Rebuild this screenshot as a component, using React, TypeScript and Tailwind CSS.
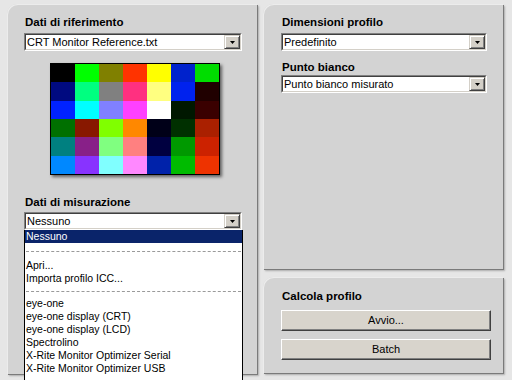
import React from "react";

const grid: string[][] = [
  ["#000000", "#00ff00", "#808000", "#ff3300", "#ffff00", "#0022cc", "#00dd00"],
  ["#000a80", "#00ff80", "#808080", "#ff3080", "#ffff80", "#0022ee", "#200000"],
  ["#0022ff", "#00ffff", "#8080ff", "#ff40ff", "#ffffff", "#001800", "#3a0000"],
  ["#007000", "#881800", "#80ff00", "#ff8800", "#000018", "#003000", "#aa2000"],
  ["#008080", "#882088", "#80ff80", "#ff8080", "#000040", "#009900", "#cc2200"],
  ["#0088ff", "#8833ff", "#80ffff", "#ff88ff", "#0022aa", "#00bb00", "#ee3300"],
];

function DropBtn() {
  return (
    <div className="w-[16px] h-full bg-[#d4d0c8] border border-t-[#d4d0c8] border-l-[#d4d0c8] border-b-[#404040] border-r-[#404040] shadow-[inset_1px_1px_0_#ffffff,inset_-1px_-1px_0_#808080] flex items-center justify-center">
      <svg width="5" height="3" viewBox="0 0 5 3">
        <polygon points="0,0 5,0 2.5,3" fill="#000" />
      </svg>
    </div>
  );
}

function Combo({ text, w }: { text: string; w: string }) {
  return (
    <div className={`h-[18px] border border-t-[#808080] border-l-[#808080] border-b-white border-r-white ${w}`}>
      <div className="h-full flex items-stretch border border-t-[#404040] border-l-[#404040] border-b-[#d4d0c8] border-r-[#d4d0c8] bg-white">
        <div className="flex-1 pl-[1px] text-[11px] leading-[14px] text-black whitespace-nowrap overflow-hidden">{text}</div>
        <DropBtn />
      </div>
    </div>
  );
}

function Label({ children }: { children: React.ReactNode }) {
  return <div className="text-[11.5px] leading-[14px] font-bold text-black">{children}</div>;
}

function Button({ children }: { children: React.ReactNode }) {
  return (
    <div className="w-[210px] h-[21px] bg-[#d8d4cc] border border-t-white border-l-white border-b-[#404040] border-r-[#404040] shadow-[inset_-1px_-1px_0_#808080] flex items-center justify-center text-[11px] text-black">
      {children}
    </div>
  );
}

function Sep({ h }: { h: string }) {
  return (
    <div className={`${h} flex items-center px-[1px]`}>
      <div className="w-full border-t border-dashed border-[#9a9a9a]" />
    </div>
  );
}

const panel =
  "bg-[#d3d3d3] rounded-tl-[10px] shadow-[inset_1px_1px_0_#ececec,1px_1px_0_#7a7a7a,2px_2px_2px_rgba(0,0,0,0.25)]";

export default function App() {
  return (
    <div className="w-[512px] h-[380px] overflow-hidden bg-[#e6e6e6] flex gap-[6px] pl-[7px] pt-[4px] font-['Liberation_Sans',Arial,sans-serif]">
      <div className={`w-[250px] h-[370px] ${panel} pl-[17px] pt-[11px] flex flex-col`}>
        <div className="pl-[1px]">
          <Label>Dati di riferimento</Label>
        </div>
        <div className="mt-[4px]">
          <Combo text="CRT Monitor Reference.txt" w="w-[218px]" />
        </div>
        <div className="mt-[12px] ml-[26px] w-[170px] h-[112px] border border-black bg-black grid grid-cols-7 grid-rows-6 shadow-[2px_2px_3px_rgba(0,0,0,0.55)]">
          {grid.flat().map((c, i) => (
            <div key={i} style={{ backgroundColor: c }} />
          ))}
        </div>
        <div className="mt-[20px] pl-[1px]">
          <Label>Dati di misurazione</Label>
        </div>
        <div className="mt-[3px] relative">
          <Combo text="Nessuno" w="w-[218px]" />
          <div className="absolute left-0 top-[18px] w-[219px] h-[160px] bg-white border border-black border-t-0 text-[10.5px] leading-[13px] text-black">
            <div className="h-[13px] bg-[#0a246a] text-white pl-[1px]">Nessuno</div>
            <Sep h="h-[16px]" />
            <div className="h-[13px] pl-[1px]">Apri...</div>
            <div className="h-[13px] pl-[1px]">Importa profilo ICC...</div>
            <Sep h="h-[12px]" />
            <div className="h-[13px] pl-[1px]">eye-one</div>
            <div className="h-[13px] pl-[1px]">eye-one display (CRT)</div>
            <div className="h-[13px] pl-[1px]">eye-one display (LCD)</div>
            <div className="h-[13px] pl-[1px]">Spectrolino</div>
            <div className="h-[13px] pl-[1px]">X-Rite Monitor Optimizer Serial</div>
            <div className="h-[13px] pl-[1px]">X-Rite Monitor Optimizer USB</div>
          </div>
        </div>
      </div>
      <div className="w-[240px] flex flex-col gap-[8px]">
        <div className={`h-[265px] ${panel} pl-[18px] pt-[11px] flex flex-col`}>
          <div className="pl-[1px]">
            <Label>Dimensioni profilo</Label>
          </div>
          <div className="mt-[4px]">
            <Combo text="Predefinito" w="w-[206px]" />
          </div>
          <div className="mt-[9px] pl-[1px]">
            <Label>Punto bianco</Label>
          </div>
          <div className="mt-[1px]">
            <Combo text="Punto bianco misurato" w="w-[206px]" />
          </div>
        </div>
        <div className={`h-[96px] ${panel} pl-[18px] pt-[12px] flex flex-col`}>
          <div className="pl-[1px]">
            <Label>Calcola profilo</Label>
          </div>
          <div className="mt-[7px] flex flex-col gap-[8px]">
            <Button>Avvio...</Button>
            <Button>Batch</Button>
          </div>
        </div>
      </div>
    </div>
  );
}
